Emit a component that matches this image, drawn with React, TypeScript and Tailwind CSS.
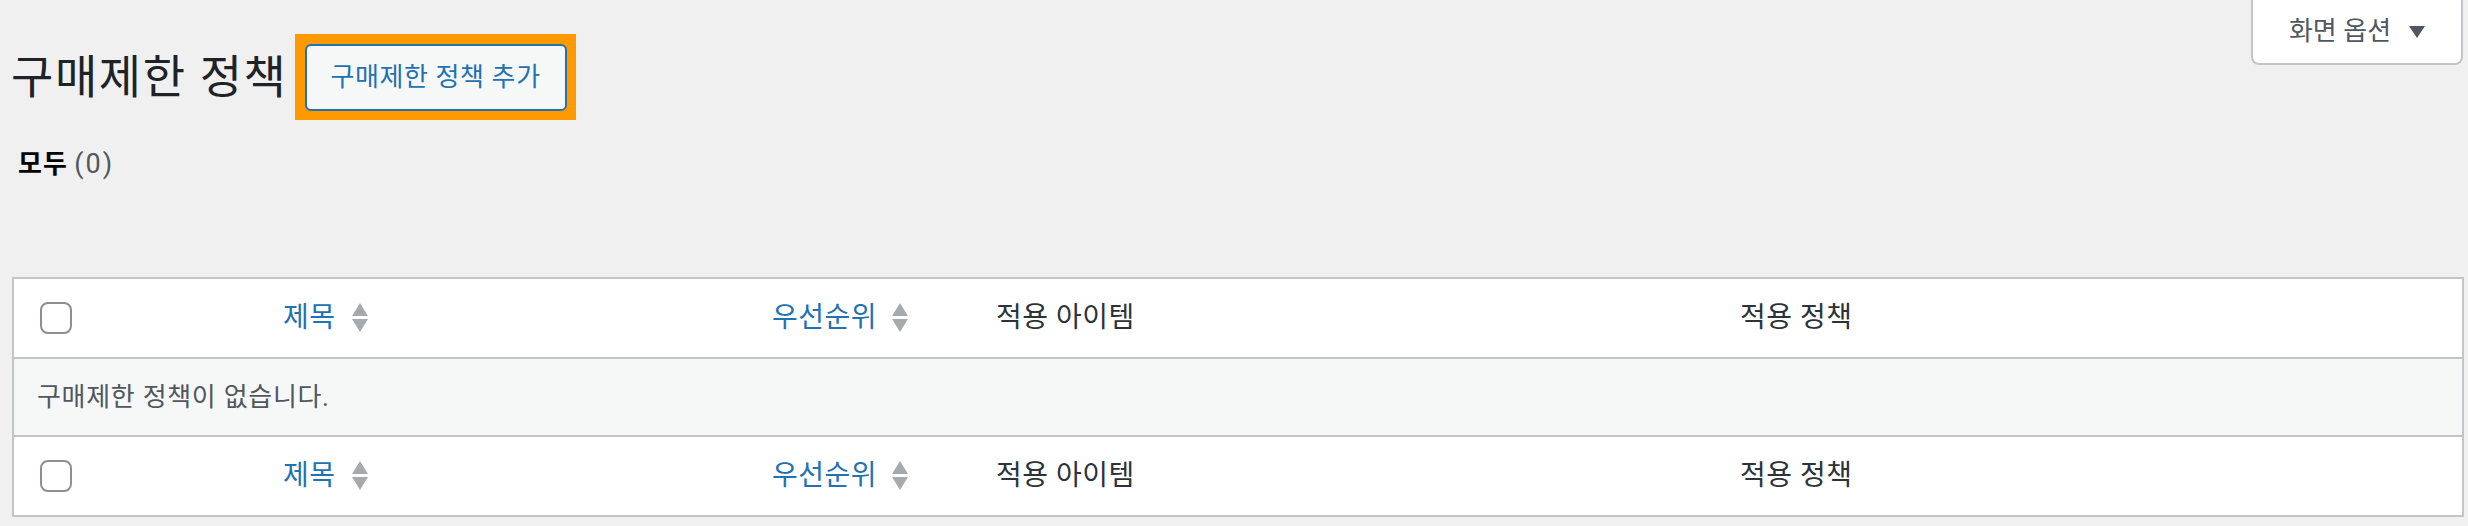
import React from "react";

function SortArrows() {
  return (
    <svg width="16" height="30" viewBox="0 0 16 30" className="shrink-0">
      <polygon points="8,0 16,13 0,13" fill="#a7aaad" />
      <polygon points="0,16 16,16 8,29" fill="#a7aaad" />
    </svg>
  );
}

function Checkbox() {
  return <div className="w-[32px] h-[32px] border-2 border-[#8c8f94] rounded-[8px] bg-white" />;
}

function HeaderRow() {
  return (
    <div className="grid grid-cols-[249px_489px_224px_744px_1fr] h-[78px] items-center bg-white text-[28px] text-[#2c3338] tracking-[0.5px]">
      <div className="pl-[26px] flex items-center">
        <Checkbox />
      </div>
      <div className="pl-[20px] flex items-center gap-[16px]">
        <span className="text-[#2271b1]">제목</span>
        <SortArrows />
      </div>
      <div className="pl-[20px] flex items-center gap-[15px]">
        <span className="text-[#2271b1]">우선순위</span>
        <SortArrows />
      </div>
      <div className="pl-[20px]">적용 아이템</div>
      <div className="pl-[20px]">적용 정책</div>
    </div>
  );
}

export default function App() {
  return (
    <div className="min-h-[526px] w-full bg-[#f0f0f1] font-[Roboto,'Noto_Sans_CJK_KR',sans-serif]">
      <div className="flex justify-between">
        <div className="flex flex-col">
          <div className="flex items-center pt-[34px] pl-[11px]">
            <h1 className="text-[46px] leading-[60px] text-[#1d2327] font-normal tracking-[1.6px]">구매제한 정책</h1>
            <div className="ml-[7px] bg-[#ff9900] pt-[10px] pl-[10px] pr-[9px] pb-[9px]">
              <div className="w-[262px] h-[67px] border-2 border-[#2271b1] rounded-[6px] bg-[#f6f7f7] flex items-center justify-center text-[26px] text-[#2271b1] tracking-[0.6px]">
                구매제한 정책 추가
              </div>
            </div>
          </div>
          <div className="pl-[18px] mt-[26px] text-[26px] leading-[36px]">
            <span className="font-semibold text-black tracking-[1px]">모두</span>{" "}
            <span className="text-[#50575e] text-[27px] tracking-[2px]">(0)</span>
          </div>
        </div>
        <div className="pr-[5px]">
          <div className="w-[212px] h-[65px] bg-white border-2 border-t-0 border-[#c3c4c7] rounded-b-[8px] flex items-center justify-center gap-[18px] text-[26px] text-[#50575e]">
            <span>화면 옵션</span>
            <svg width="16" height="12" viewBox="0 0 16 12">
              <polygon points="0,0 16,0 8,12" fill="#50575e" />
            </svg>
          </div>
        </div>
      </div>
      <div className="pl-[12px] pr-[4px] mt-[95px]">
        <div className="border-2 border-[#c3c4c7] bg-white">
          <HeaderRow />
          <div className="h-[80px] border-t-2 border-b-2 border-[#c3c4c7] bg-[#f6f7f7] flex items-center pl-[23px] text-[26px] text-[#50575e] tracking-[0.7px]">
            구매제한 정책이 없습니다.
          </div>
          <HeaderRow />
        </div>
      </div>
    </div>
  );
}
